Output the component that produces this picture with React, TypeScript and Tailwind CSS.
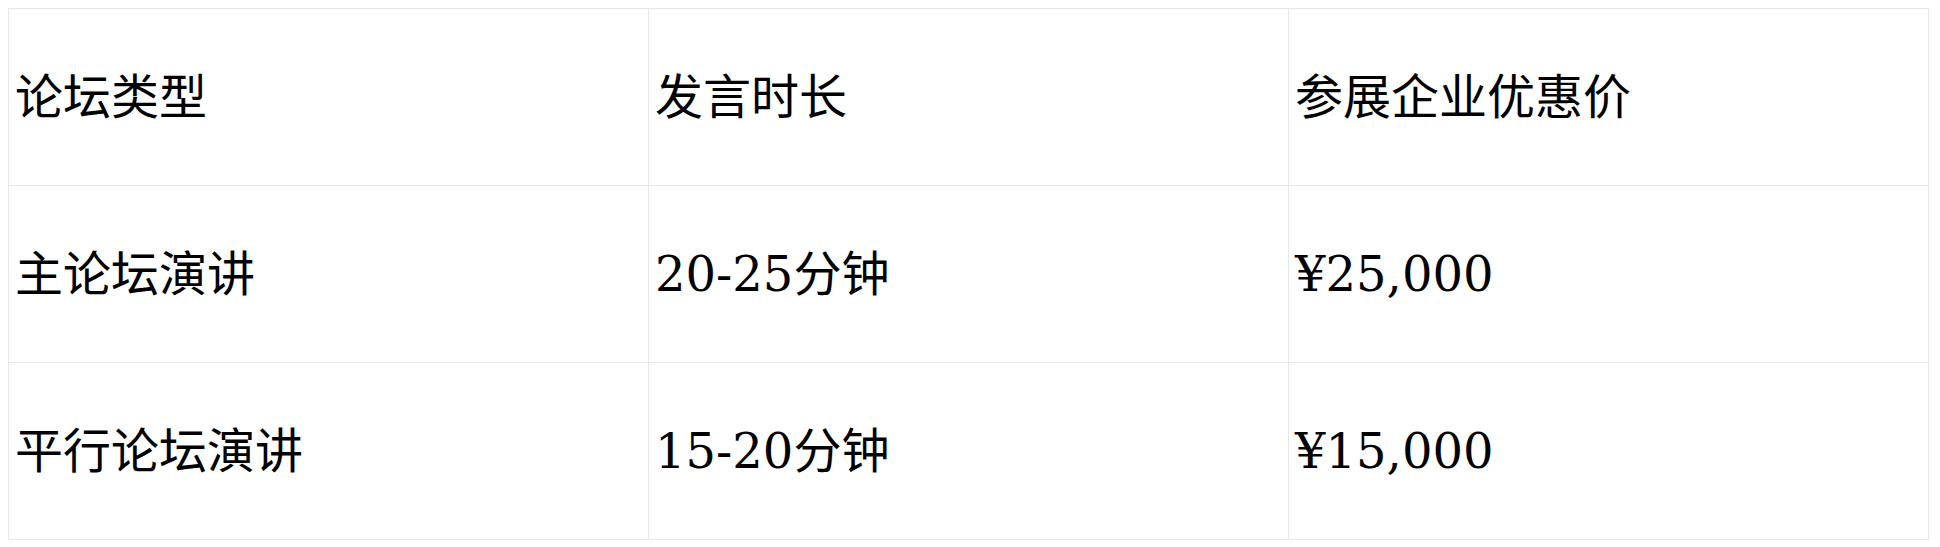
const rows = [
  ["论坛类型", "发言时长", "参展企业优惠价"],
  ["主论坛演讲", "20-25分钟", "¥25,000"],
  ["平行论坛演讲", "15-20分钟", "¥15,000"],
];

export default function App() {
  return (
    <div className="bg-white p-2 font-['DejaVu_Serif','Noto_Sans_CJK_SC',serif] text-black">
      <table className="w-[1921px] table-fixed border-collapse border border-[#e5e7eb]">
        <tbody>
          {rows.map((r, i) => (
            <tr key={i} className="h-[177px]">
              {r.map((c) => (
                <td key={c} className="border border-[#e5e7eb] px-1.5 align-middle text-[48px] leading-none">
                  {c}
                </td>
              ))}
            </tr>
          ))}
        </tbody>
      </table>
    </div>
  );
}
